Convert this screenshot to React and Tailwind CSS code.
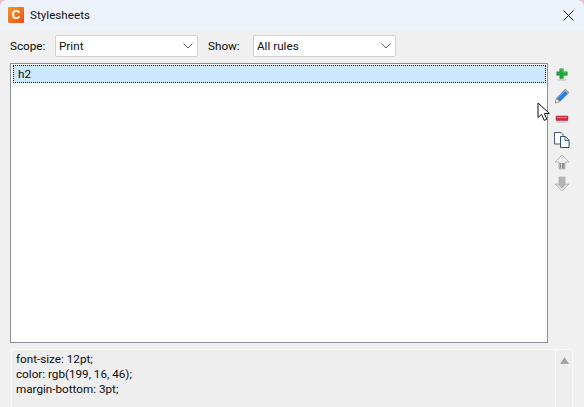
import React from "react";

const Chevron = () => (
  <svg width="10" height="6" viewBox="0 0 10 6" className="shrink-0" fill="none" stroke="#5f5f5f" strokeWidth="1">
    <path d="M0.5 0.5 L5 5 L9.5 0.5" />
  </svg>
);

const Select = ({ value, w }) => (
  <div className={`${w} h-[22px] flex items-center justify-between pl-[3px] pr-[4px] bg-white border border-[#d2d2d2] rounded-[2px] text-[#101010]`}>
    <span className="pt-[2px]">{value}</span>
    <Chevron />
  </div>
);

const Logo = () => (
  <div className="w-4 h-4 rounded-[1px] bg-gradient-to-br from-[#f79320] to-[#e9501e] flex items-center justify-center text-white font-bold text-[12px] leading-none font-['Liberation_Sans',sans-serif]">
    C
  </div>
);

const Plus = () => (
  <svg width="14" height="14" viewBox="0 0 16 16">
    <ellipse cx="8" cy="14.6" rx="6" ry="1" fill="#c9c9c9" />
    <path d="M5.5 2h4v3.5H14v4H9.5V13h-4V9.5H2v-4h3.5z" fill="#22a83a" stroke="#1c8a32" strokeWidth="0.6" />
    <path d="M6 3h3v3h4" fill="none" stroke="#6fd47c" strokeWidth="0.8" />
  </svg>
);

const Pencil = () => (
  <svg width="18" height="18" viewBox="0 0 18 18">
    <path d="M3.4 11.4 L12.4 2.2 L15.8 5.4 L6.8 14.6 L2.4 16 Z" fill="#2f7fd8" stroke="#1d5da8" strokeWidth="0.6" />
    <path d="M12.4 2.2 L15.8 5.4 L14.8 6.5 L11.3 3.3Z" fill="#f3a56b" />
    <path d="M3.4 11.4 L6.8 14.6 L2.4 16 Z" fill="#f5dcb8" stroke="#c89a60" strokeWidth="0.4" />
    <path d="M4.6 11 L12.4 3.3" stroke="#8cc0f2" strokeWidth="0.9" />
  </svg>
);

const Minus = () => (
  <svg width="16" height="16" viewBox="0 0 16 16">
    <ellipse cx="8" cy="12" rx="6.5" ry="1" fill="#cfcfcf" />
    <rect x="2" y="6" width="12" height="4.5" rx="0.6" fill="#c9303c" stroke="#a82430" strokeWidth="0.5" />
    <rect x="3" y="7" width="10" height="1" fill="#e9808a" />
  </svg>
);

const Copy = () => (
  <svg width="18" height="18" viewBox="0 0 18 18">
    <path d="M1.5 1.5h6.5l2 2v9.5h-8.5z" fill="#fff" stroke="#44597a" strokeWidth="1" />
    <path d="M7.5 5.5h5l3.5 3.5v7.5h-8.5z" fill="#fff" stroke="#2f4a78" strokeWidth="1" />
    <path d="M12 5.5v4h4" fill="#dfe6f1" stroke="#2f4a78" strokeWidth="0.8" />
  </svg>
);

const Up = () => (
  <svg width="16" height="16" viewBox="0 0 16 16">
    <path d="M8 1 L15 8 H11 V15 H5 V8 H1 Z" fill="#efefef" stroke="#a8a8a8" strokeWidth="0.8" />
    <path d="M5.5 9h5v5.5h-5z" fill="#8f8f8f" />
    <path d="M7.5 9v5.5" stroke="#e4e4e4" strokeWidth="0.8" />
  </svg>
);

const Down = () => (
  <svg width="16" height="16" viewBox="0 0 16 16">
    <path d="M5 1 H11 V8 H15 L8 15 L1 8 H5 Z" fill="#b4b4b4" stroke="#b0b0b0" strokeWidth="0.8" />
    <path d="M3 8.6 L8 13.6 L13 8.6" fill="none" stroke="#ececec" strokeWidth="1.2" />
  </svg>
);

const Cursor = () => (
  <svg width="14" height="20" viewBox="0 0 14 20" className="absolute left-[537px] top-[102px]">
    <path d="M1 1 L1 15.5 L4.6 12.4 L7.2 18.4 L9.8 17.2 L7.3 11.6 L12.4 11.4 Z" fill="#fff" stroke="#111" strokeWidth="1" strokeLinejoin="round" />
  </svg>
);

const Icon = ({ children }) => (
  <div className="w-[18px] h-[22px] flex items-center justify-center">{children}</div>
);

export default function App() {
  return (
    <div className="relative w-[584px] h-[407px] overflow-hidden flex flex-col bg-[#f0f0f0] text-[11.7px] leading-[15px] font-['Roboto',sans-serif] text-[#0c0c0c]">
      <div className="h-[30px] shrink-0 bg-[#e8c4d2]">
        <div className="h-full flex items-center justify-between pl-2 pr-[8px] bg-[#eef3fb] rounded-t-[7px]">
          <div className="flex items-center gap-[6px]">
            <Logo />
            <span className="text-[#111] pt-[1px]">Stylesheets</span>
          </div>
          <svg width="11" height="11" viewBox="0 0 11 11" fill="none" stroke="#1a1a1a" strokeWidth="1" className="mr-[2px]">
            <path d="M0.5 0.5 L10.5 10.5 M10.5 0.5 L0.5 10.5" />
          </svg>
        </div>
      </div>

      <div className="flex items-center h-[33px] pl-[10px] pb-[2px] shrink-0">
        <span className="w-[45px] pt-[2px]">Scope:</span>
        <Select value="Print" w="w-[143px]" />
        <span className="ml-[10px] w-[45px] pt-[2px]">Show:</span>
        <Select value="All rules" w="w-[143px]" />
      </div>

      <div className="flex pl-[10px] shrink-0">
        <div className="w-[538px] h-[280px] bg-white border border-[#8c8f96] p-[1px]">
          <div className="h-[18px] ml-[1px] bg-[#cce8ff] border border-dotted border-[#111] flex items-center pl-[4px] pt-[1px]">
            h2
          </div>
        </div>
        <div className="w-[28px] flex flex-col items-center">
          <Icon><Plus /></Icon>
          <Icon><Pencil /></Icon>
          <Icon><Minus /></Icon>
          <Icon><Copy /></Icon>
          <Icon><Up /></Icon>
          <Icon><Down /></Icon>
        </div>
      </div>

      <div className="flex-1 mt-[6px] ml-[11px] w-[562px] flex border-t border-[#f7f7f7] border-l border-r">
        <div className="flex-1 pl-[4px] pt-[2px] bg-[#eeeeee]">
          <div>font-size: 12pt;</div>
          <div>color: rgb(199, 16, 46);</div>
          <div>margin-bottom: 3pt;</div>
        </div>
        <div className="w-[17px] border-l border-[#fafafa] bg-[#eeeeee] flex justify-center pt-[7px]">
          <svg width="9" height="7" viewBox="0 0 9 7"><path d="M4.5 0 L9 7 H0 Z" fill="#a3a3a3" /></svg>
        </div>
      </div>

      <Cursor />
    </div>
  );
}
